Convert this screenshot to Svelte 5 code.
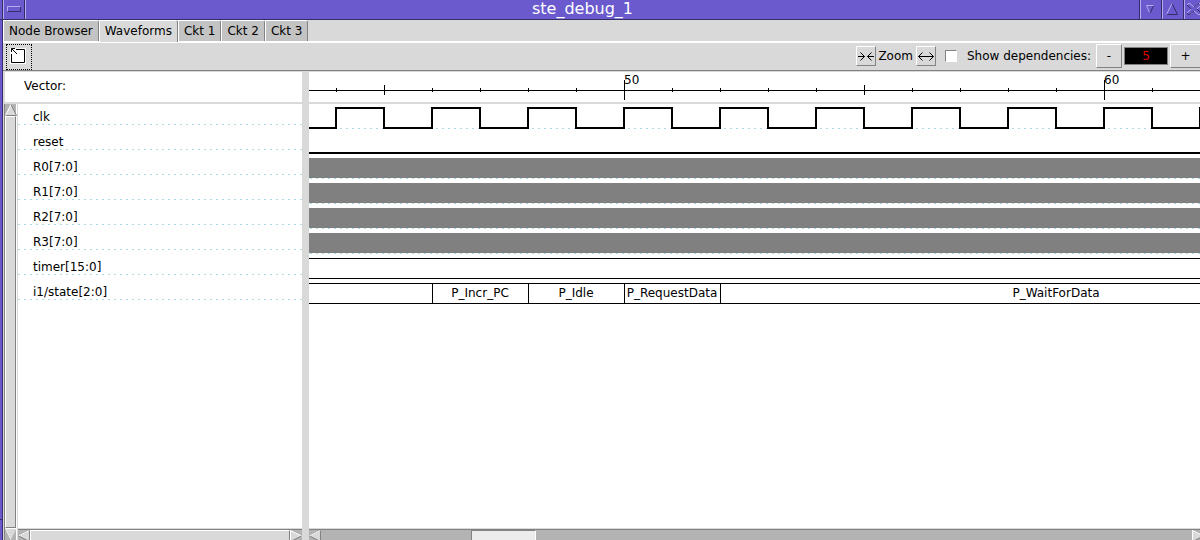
<script>
  const tabs = ['Node Browser', 'Waveforms', 'Ckt 1', 'Ckt 2', 'Ckt 3'];
  let active = $state('Waveforms');
  let depth = $state(5);
  let showDeps = $state(false);
  let plotWidth = $state(900);

  const signals = [
    { name: 'clk', kind: 'clock' },
    { name: 'reset', kind: 'low' },
    { name: 'R0[7:0]', kind: 'unknown' },
    { name: 'R1[7:0]', kind: 'unknown' },
    { name: 'R2[7:0]', kind: 'unknown' },
    { name: 'R3[7:0]', kind: 'unknown' },
    { name: 'timer[15:0]', kind: 'bus' },
    { name: 'i1/state[2:0]', kind: 'bus', segments: [
      { from: 46, to: 48, label: 'P_Incr_PC' },
      { from: 48, to: 50, label: 'P_Idle' },
      { from: 50, to: 52, label: 'P_RequestData' },
      { from: 52, to: 66, label: 'P_WaitForData' }
    ] }
  ];

  const unit = 48;
  const rowHeight = 25;
  const firstTick = 44;
  const firstX = 27;
  const xOf = (t) => firstX + (t - firstTick) * unit;
  const ticks = $derived(
    Array.from({ length: Math.ceil(plotWidth / unit) + 1 }, (_, i) => firstTick + i)
      .filter((t) => xOf(t) <= plotWidth)
  );
  const clockPath = $derived(
    'M0 24' + ticks.map((t) => `H${xOf(t)}V${t % 2 ? 24 : 4}`).join('') + `H${plotWidth + 2}`
  );

  function tickSpan(t) {
    if (t % 10 === 0) return [8, 28];
    if (t % 5 === 0) return [13, 23];
    return [16, 20];
  }
</script>

{#snippet arrow(dir)}
  <svg class="arrow {dir}" width="12" height="12" viewBox="0 0 12 12" aria-hidden="true">
    <path d="M6 .5L11.500 11.500H.5Z" fill="#d9d9d9" />
    <path d={dir === 'up' || dir === 'left' ? 'M.5 11.500H11.500L6 .5' : 'M11.500 11.500L6 .5'} stroke="#828282" fill="none" />
    <path d={dir === 'up' ? 'M6 .5L.5 11.500' : dir === 'left' ? 'M6 .5L11.500 11.500' : dir === 'right' ? 'M.5 11.500L6 .5M.5 11.500H11.500' : 'M.5 11.500H11.500L6 .5'} stroke="#fff" fill="none" />
    {#if dir === 'left'}<path d="M11.500 11.500H.5L6 .5" stroke="#828282" fill="none" />{/if}
  </svg>
{/snippet}

<div class="window">
  <div class="frame"><span></span></div>
  <div class="main">
    <header class="titlebar">
      <button class="wm menu" aria-label="Window menu"><span></span></button>
      <h1>ste_debug_1</h1>
      <button class="wm" aria-label="Minimise">
        <svg width="20" height="19" viewBox="1 0 20 19">
          <path d="M13.500 5.500L10.500 12.500H9" stroke="#352d67" fill="none" />
          <path d="M13.500 5.500H6.500L9.500 12.500" stroke="#b4acf0" fill="none" />
        </svg>
      </button>
      <button class="wm" aria-label="Maximise">
        <svg width="20" height="19" viewBox="1 0 20 19">
          <path d="M4.500 14.500H15.500L10 3.500" stroke="#352d67" fill="none" />
          <path d="M4.500 14.500L10 3.500" stroke="#b4acf0" fill="none" />
        </svg>
      </button>
      <button class="wm last" aria-label="Close">
        <svg width="20" height="19" viewBox="1 0 20 19">
          <path d="M3 5L5 3L10 7L15 3L17 5L13 9L17 13L15 15L10 11L5 15L3 13L7 9Z" stroke="#b4acf0" fill="none" />
          <path d="M3 5L7 9M10 7L15 3M10 11L5 15L3 13M17 13L13 9" stroke="#352d67" fill="none" />
        </svg>
      </button>
    </header>

    <nav class="tabs">
      {#each tabs as tab}
        <button class:active={tab === active} onclick={() => (active = tab)}>{tab}</button>
      {/each}
    </nav>

    <div class="toolbar">
      <button class="detach" aria-label="Detach view">
        <svg width="16" height="16" viewBox="0 0 16 16">
          <path d="M0 0H16V16H0Z" fill="#fff" />
          <path d="M1.500 1.500H14.500V14.500H1.500Z" stroke="#000" fill="none" />
          <path d="M0 0H6V3H3V6H0Z" fill="#fff" />
          <path d="M1.500 4V.5H5M1.500 .5L7 6" stroke="#000" fill="none" />
        </svg>
      </button>
      <div class="tools">
        <button class="zoom" aria-label="Zoom out">
          <svg width="18" height="18" viewBox="0 0 18 18"><path d="M1 9.500H7.500M3.500 5.500L7.500 9.500L3.500 13.500M17 9.500H10.500M14.500 5.500L10.500 9.500L14.500 13.500" /></svg>
        </button>
        <span class="zoom-text">Zoom</span>
        <button class="zoom" aria-label="Zoom in">
          <svg width="18" height="18" viewBox="0 0 18 18"><path d="M1.500 9.500H16.500M5.500 5.500L1.500 9.500L5.500 13.500M12.500 5.500L16.500 9.500L12.500 13.500" /></svg>
        </button>
        <input id="deps" type="checkbox" bind:checked={showDeps} />
        <label for="deps">Show dependencies:</label>
        <button class="step" aria-label="Decrease" onclick={() => depth--}>-</button>
        <input class="depth" type="text" aria-label="Dependency depth" bind:value={depth} />
        <button class="step plus" aria-label="Increase" onclick={() => depth++}>+</button>
      </div>
    </div>

    <div class="panes">
      <section class="names">
        <div class="vector">Vector:</div>
        <div class="list">
          <div class="vscroll">
            <div class="cap">{@render arrow('up')}</div>
            <div class="thumb"></div>
            <div class="cap">{@render arrow('down')}</div>
          </div>
          <div class="listbody">
            <ul>
              {#each signals as s}
                <li>
                  <span>{s.name}</span>
                  <svg width="100%" height="1"><line x1="0" x2="100%" y1=".5" y2=".5" class="dash" /></svg>
                </li>
              {/each}
            </ul>
            <div class="hscroll">
              <div class="cap">{@render arrow('left')}</div>
              <div class="thumb"></div>
              <div class="cap">{@render arrow('right')}</div>
            </div>
          </div>
        </div>
      </section>

      <section class="waves" bind:clientWidth={plotWidth}>
        <svg class="ruler" width="100%" height="30">
          <line x1="0" x2="100%" y1="18.500" y2="18.500" class="thin" />
          {#each ticks as t}
            {@const span = tickSpan(t)}
            <line x1={xOf(t) + 0.5} x2={xOf(t) + 0.5} y1={span[0]} y2={span[1]} class="thin" />
            {#if t % 10 === 0}<text x={xOf(t)} y="12">{t}</text>{/if}
          {/each}
        </svg>
        <div class="plot">
          <svg width="100%" height={signals.length * rowHeight}>
            {#each signals as s, i}
              <g transform="translate(0 {i * rowHeight})">
                <line x1="1" x2="100%" y1="24.500" y2="24.500" class="dash" />
                {#if s.kind === 'clock'}
                  <path d={clockPath} class="thick" />
                {:else if s.kind === 'low'}
                  <line x1="0" x2="100%" y1="24" y2="24" class="thick" />
                {:else if s.kind === 'unknown'}
                  <rect width="100%" y="4" height="20" fill="#808080" />
                {:else}
                  <line x1="0" x2="100%" y1="4.500" y2="4.500" class="thin" />
                  <line x1="0" x2="100%" y1="24.500" y2="24.500" class="thin" />
                  {#each s.segments ?? [] as seg}
                    <line x1={xOf(seg.from) + 0.5} x2={xOf(seg.from) + 0.5} y1="4" y2="25" class="thin" />
                    <text x={(xOf(seg.from) + xOf(seg.to)) / 2} y="18" text-anchor="middle">{seg.label}</text>
                  {/each}
                {/if}
              </g>
            {/each}
          </svg>
        </div>
        <div class="hscroll">
          <div class="cap">{@render arrow('left')}</div>
          <div class="track"><div class="handle"></div></div>
          <div class="cap end">{@render arrow('right')}</div>
        </div>
      </section>
    </div>
  </div>
</div>

<style>
  :global(body) { margin: 0; }
  * { box-sizing: border-box; }
  button, input { font: inherit; color: inherit; padding: 0; margin: 0; border-radius: 0; }
  svg { display: block; flex: none; }
  .window {
    display: flex; height: 100vh; overflow: hidden; background: #d9d9d9;
    font: 12px/16px "DejaVu Sans", sans-serif; color: #000;
  }
  .frame {
    display: flex; flex-direction: column; width: 3px; flex: none;
    background: #6a5acd; border-right: 1px solid #352d67;
  }
  .frame span { height: 20px; border-bottom: 1px solid #352d67; }
  .frame::after { content: ''; margin-top: auto; height: 20px; border-top: 1px solid #352d67; }
  .main { display: flex; flex-direction: column; flex: 1; min-width: 0; }
  .titlebar {
    display: flex; height: 20px; flex: none; background: #6a5acd;
    border-bottom: 1px solid #352d67; color: #fff; overflow: hidden;
  }
  h1 { flex: 1; margin: 0; font-size: 16px; line-height: 17px; font-weight: 400; text-align: center; }
  .wm {
    width: 22px; height: 19px; flex: none; overflow: hidden; background: #6a5acd;
    border: 0; border-left: 1px solid #b4acf0; border-right: 1px solid #352d67;
  }
  .wm:nth-of-type(2) { box-shadow: -1px 0 #352d67; }
  .wm.last { width: 16px; border-right: 0; }
  .wm.menu { padding-bottom: 1px; box-shadow: 1px 0 #b4acf0; }
  .menu span {
    display: block; width: 14px; height: 6px; margin-left: 3px;
    border: 1px solid; border-color: #b4acf0 #352d67 #352d67 #b4acf0;
  }
  .tabs { display: flex; height: 23px; flex: none; border-bottom: 2px solid #fff; }
  .tabs button {
    height: 21px; padding: 0 5px 1px; background: #c3c3c3; border: 0; white-space: nowrap;
    border-top: 1px solid #fff; border-left: 1px solid #fff; border-right: 1px solid #828282;
    border-radius: 0 3px 0 0;
  }
  .tabs .active { height: 22px; padding-bottom: 2px; background: #d9d9d9; }
  .toolbar {
    display: flex; align-items: flex-start; justify-content: space-between;
    height: 28px; flex: none; padding: 1px 0 0 3px; border-bottom: 1px solid #828282;
  }
  .detach {
    display: grid; justify-content: start; align-content: start; width: 26px; height: 26px;
    padding: 3px; border: 1px dotted #000; background: #d9d9d9;
  }
  .tools { display: flex; align-items: center; height: 24px; }
  .tools button { background: #d9d9d9; border: 1px solid; border-color: #fff #828282 #828282 #fff; }
  .zoom { width: 20px; height: 20px; }
  .zoom path { stroke: #000; fill: none; }
  .zoom-text { margin: 0 3px 0 2px; }
  #deps {
    appearance: none; width: 12px; height: 12px; margin: 0 10px 0 9px; background: #fff;
    border: 1px solid; border-color: #828282 #fff #fff #828282;
  }
  #deps:checked { background: #b03060; }
  label { margin-right: 5px; }
  .step { width: 26px; height: 24px; }
  .tools .plus { width: 30px; border-right: 0; }
  .depth {
    width: 44px; height: 18px; margin: 0 2px; text-align: center; background: #000; color: #e00000;
    border: 1px solid #828282;
  }
  .panes { display: flex; flex: 1; min-height: 0; padding: 1px 0 0 1px; }
  .names { display: flex; flex-direction: column; width: 298px; flex: none; margin-right: 7px; }
  .vector { height: 30px; flex: none; margin-bottom: 2px; padding: 6px 0 0 19px; background: #fff; border-left: 1px solid #d9d9d9; }
  .list { display: flex; flex: 1; min-height: 0; }
  .vscroll { display: flex; flex-direction: column; width: 12px; margin-right: 2px; background: #b3b3b3; border-left: 1px solid #828282; box-shadow: 1px 0 #fff; }
  .cap { display: grid; place-items: center; width: 12px; height: 12px; flex: none; }
  .vscroll .cap { width: 11px; }
  .thumb { flex: 1; background: #d9d9d9; border: 1px solid; border-color: #fff #828282 #828282 #fff; }
  .arrow.down { transform: rotate(180deg); }
  .arrow.left { transform: rotate(-90deg); }
  .arrow.right { transform: rotate(90deg); }
  .listbody { display: flex; flex-direction: column; flex: 1; min-width: 0; background: #fff; }
  ul { flex: 1; margin: 0; padding: 0; list-style: none; }
  li { height: 25px; display: flex; flex-direction: column; }
  li span { height: 20px; padding: 5px 0 0 15px; }
  .dash { stroke: #add8e6; stroke-dasharray: 2 4; }
  .hscroll {
    display: flex; height: 12px; flex: none; overflow: hidden; background: #b3b3b3;
    border-top: 1px solid #d9d9d9; box-shadow: inset 0 1px #828282; padding-top: 1px;
  }
  .hscroll .thumb { height: 14px; }
  .waves { display: flex; flex-direction: column; flex: 1; min-width: 0; }
  .ruler { margin-bottom: 2px; background: #fff; }
  .plot { flex: 1; min-height: 0; overflow: hidden; background: #fff; }
  .thin { stroke: #000; stroke-width: 1; }
  .thick { stroke: #000; stroke-width: 2; fill: none; }
  .track { flex: 1; }
  .handle {
    width: 65px; height: 14px; margin-left: 17.200%; background: #ececec;
    border: 1px solid; border-color: #828282 #fff #fff #828282;
  }
  .end { width: 8px; overflow: hidden; place-items: center start; }
</style>
